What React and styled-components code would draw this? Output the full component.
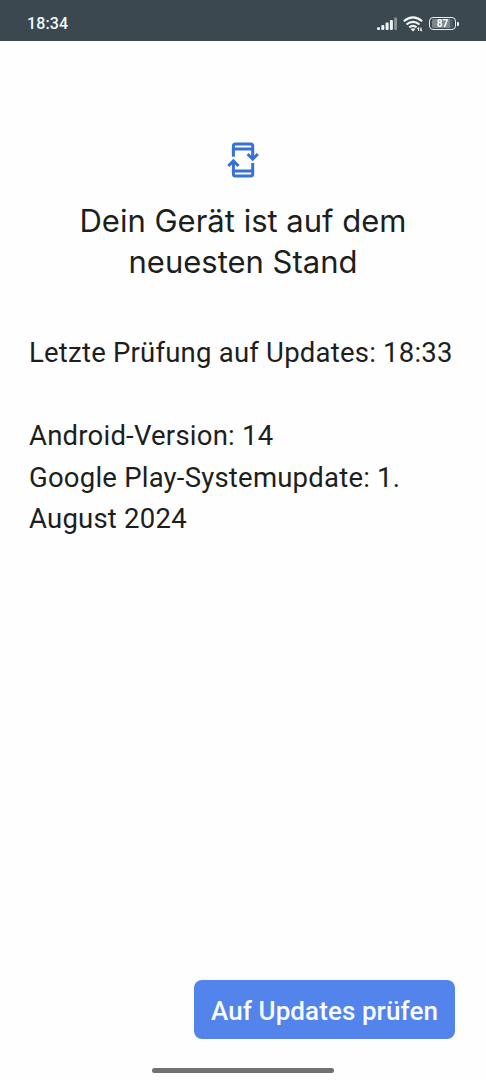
import React from "react";
import styled, { createGlobalStyle } from "styled-components";

const GlobalStyle = createGlobalStyle`
  * { box-sizing: border-box; }
  body { margin: 0; background: #fefefe; }
`;

const Screen = styled.div`
  width: 100%;
  height: 1080px;
  display: flex;
  flex-direction: column;
  background: #fefefe;
  color: #1d1e20;
  font-family: Roboto, sans-serif;
`;

const StatusBar = styled.header`
  height: 41px;
  flex: none;
  display: flex;
  justify-content: space-between;
  align-items: center;
  padding: 6px 27px 0 27px;
  background: #3b484f;
`;

const Clock = styled.time`
  color: #f3f8f9;
  font-size: 16px;
  font-weight: 500;
  line-height: 20px;
  letter-spacing: 0.1px;
  padding-top: 1px;
`;

const Indicators = styled.div`
  display: flex;
  align-items: center;
  gap: 6px;
  svg { display: block; }
`;

const Battery = styled.div`
  display: flex;
  align-items: center;
  &::after {
    content: "";
    width: 2px;
    height: 4px;
    margin-left: 1px;
    border-radius: 0 1px 1px 0;
    background: #e8eef0;
  }
`;

const BatteryLevel = styled.span`
  width: 27px;
  height: 13px;
  border: 1.5px solid #e8eef0;
  border-radius: 4px;
  padding: 1px 2px;
  background: linear-gradient(90deg, #7b858a 85%, #505c62 85%) content-box;
  color: #fff;
  font-size: 10px;
  font-weight: 700;
  line-height: 9.5px;
  text-align: center;
`;

const Content = styled.main`
  flex: 1;
  display: flex;
  flex-direction: column;
  padding: 99px 29px 0;
`;

const UpdateIcon = styled.svg`
  display: block;
  width: 40px;
  height: 40px;
  margin: 0 auto;
`;

const Title = styled.h1`
  margin: 21px 0 0;
  text-align: center;
  font-family: Inter, sans-serif;
  font-size: 31px;
  font-weight: 400;
  line-height: 40.5px;
  letter-spacing: 0;
`;

const Details = styled.div`
  margin-top: 50px;
  display: flex;
  flex-direction: column;
  gap: 41.5px;
`;

const Paragraph = styled.p`
  margin: 0;
  font-size: 27.5px;
  line-height: 41.5px;
  letter-spacing: 0.22px;
  white-space: nowrap;
`;

const Actions = styled.footer`
  display: flex;
  justify-content: flex-end;
  padding: 0 31px 0 0;
`;

const PrimaryButton = styled.button`
  width: 261px;
  height: 59px;
  padding: 3px 0 0;
  border: 0;
  border-radius: 8px;
  background: #5284ec;
  color: #fafcff;
  font: 500 26px/32px Roboto, sans-serif;
  letter-spacing: 0.08px;
  white-space: nowrap;
`;

const GestureArea = styled.div`
  height: 41px;
  display: flex;
  justify-content: center;
  padding-top: 29px;
`;

const GestureHandle = styled.div`
  width: 182px;
  height: 4.5px;
  border-radius: 3px;
  background: #707170;
`;

function SignalIcon() {
  return (
    <svg width="20" height="14" viewBox="0 0 20 14" fill="#eef3f4">
      <rect x="0" y="10.3" width="3" height="2.7" rx="1" />
      <rect x="4.3" y="8" width="3" height="5" rx="1" />
      <rect x="8.6" y="5.5" width="3" height="7.5" rx="1" />
      <rect x="12.9" y="3" width="3" height="10" rx="1" />
      <rect x="17.2" y="0.5" width="2.8" height="12.5" rx="1" opacity=".45" />
    </svg>
  );
}

function WifiIcon() {
  return (
    <svg width="20" height="16" viewBox="0 0 20 16" fill="none" stroke="#f2f6f7" strokeWidth="2.1">
      <path d="M.8 5.3Q10-2.4 19.2 5.3M3.5 8.5Q10 3.1 16.5 8.5M6.3 11.4Q10 8.5 13.5 11.4" />
      <path d="M10 15.5 7.6 13Q10 11.3 12.4 13Z" fill="#f2f6f7" stroke="none" />
      <path d="M15.6 15v-3.4M14.4 12.8l1.2-1.2M17.9 11.6V15M17.9 15l1.2-1.2" strokeWidth="1.2" />
    </svg>
  );
}

export default function App() {
  return (
    <Screen>
      <GlobalStyle />
      <StatusBar>
        <Clock>18:34</Clock>
        <Indicators>
          <SignalIcon />
          <WifiIcon />
          <Battery><BatteryLevel>87</BatteryLevel></Battery>
        </Indicators>
      </StatusBar>
      <Content>
        <UpdateIcon viewBox="0 0 40 40" fill="none" stroke="#3870d6" strokeWidth="3">
          <path d="M10.4 16.7V6Q10.4 4 12.4 4H27.7Q29.7 4 29.7 6V18.5M10.4 9H29.7M24.6 14l5.1 5.1 5.1-5.1" />
          <path d="M29.7 23V34Q29.7 36 27.7 36H12.4Q10.4 36 10.4 34V21.5M10.4 31H29.7M5.3 26l5.1-5.1 5.1 5.1" />
        </UpdateIcon>
        <Title>Dein Gerät ist auf dem<br />neuesten Stand</Title>
        <Details>
          <Paragraph>Letzte Prüfung auf Updates: 18:33</Paragraph>
          <Paragraph>
            Android-Version: 14<br />
            Google Play-Systemupdate: 1.<br />
            August 2024
          </Paragraph>
        </Details>
      </Content>
      <Actions>
        <PrimaryButton type="button">Auf Updates prüfen</PrimaryButton>
      </Actions>
      <GestureArea><GestureHandle /></GestureArea>
    </Screen>
  );
}
